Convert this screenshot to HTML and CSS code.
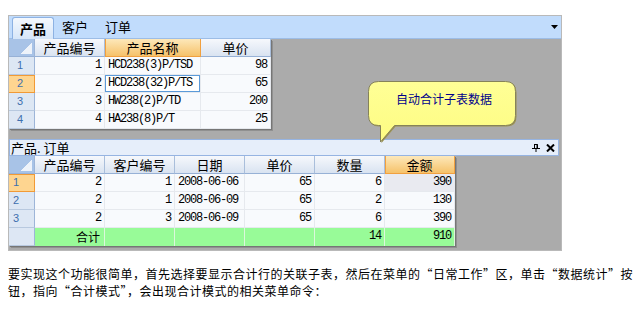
FILE: index.html
```html
<!DOCTYPE html>
<html lang="zh-CN">
<head>
	<meta charset="UTF-8">
	<title>合计模式</title>
	<link rel="stylesheet" href="styles.css">
</head>
<body>
	<div id="frame">
		<div id="tabbar">
			<span class="tab tab-on">产品</span>
			<span class="tab">客户</span>
			<span class="tab">订单</span>
			<svg class="drop" width="7" height="4" viewBox="0 0 7 4"><path d="M0 0H7L3.5 4Z" fill="#000"/></svg>
		</div>
		<div id="master">
			<div class="grid grid-master">
				<div class="corner"></div>
				<div class="hd">产品编号</div>
				<div class="hd hd-on">产品名称</div>
				<div class="hd">单价</div>

				<div class="ind">1</div>
				<div class="num">1</div>
				<div class="txt">HCD238(3)P/TSD</div>
				<div class="num">98</div>

				<div class="ind ind-on">2</div>
				<div class="num">2</div>
				<div class="txt focus">HCD238(32)P/TS</div>
				<div class="num">65</div>

				<div class="ind">3</div>
				<div class="num">3</div>
				<div class="txt">HW238(2)P/TD</div>
				<div class="num">200</div>

				<div class="ind">4</div>
				<div class="num">4</div>
				<div class="txt">HA238(8)P/T</div>
				<div class="num">25</div>
			</div>
		</div>
		<div id="detail-title">
			<span>产品. 订单</span>
			<svg class="pin" width="8" height="8" viewBox="0 0 8 8"><path d="M2 0.5H5.5M2.5 0.5V4M5.5 0.5V4M0 4.5H8M4 4.5V8" stroke="#000" stroke-width="1" fill="none"/><path d="M5 0V4" stroke="#000" stroke-width="1"/></svg>
			<svg class="close" width="9" height="8" viewBox="0 0 9 8"><path d="M1 0.5L8 7.5M8 0.5L1 7.5" stroke="#000" stroke-width="2"/></svg>
		</div>
		<div id="detail">
			<div class="grid grid-detail">
				<div class="corner"></div>
				<div class="hd">产品编号</div>
				<div class="hd">客户编号</div>
				<div class="hd">日期</div>
				<div class="hd">单价</div>
				<div class="hd">数量</div>
				<div class="hd hd-on">金额</div>

				<div class="ind ind-low ind-on">1</div>
				<div class="num">2</div>
				<div class="num">1</div>
				<div class="txt">2008-06-06</div>
				<div class="num">65</div>
				<div class="num">6</div>
				<div class="num cur">390</div>

				<div class="ind ind-low">2</div>
				<div class="num">2</div>
				<div class="num">1</div>
				<div class="txt">2008-06-09</div>
				<div class="num">65</div>
				<div class="num">2</div>
				<div class="num">130</div>

				<div class="ind ind-low">3</div>
				<div class="num">2</div>
				<div class="num">3</div>
				<div class="txt">2008-06-09</div>
				<div class="num">65</div>
				<div class="num">6</div>
				<div class="num">390</div>

				<div class="ind ind-low"></div>
				<div class="sum sum-label">合计</div>
				<div class="sum"></div>
				<div class="sum"></div>
				<div class="sum"></div>
				<div class="sum num">14</div>
				<div class="sum num">910</div>
			</div>
		</div>
		<div id="balloon">
			<svg width="152" height="64" viewBox="0 0 152 64">
				<defs>
					<linearGradient id="bg" x1="0" y1="0" x2="0" y2="1">
						<stop offset="0" stop-color="#ffff96"/>
						<stop offset="1" stop-color="#fdfc82"/>
					</linearGradient>
				</defs>
				<path d="M11.5 1.5H138.5Q148.5 1.5 148.5 11.5V35.5Q148.5 45.5 138.5 45.5H27.5L13.5 62V45.5H11.5Q1.5 45.5 1.5 35.5V11.5Q1.5 1.5 11.5 1.5Z" fill="#9b9150"/>
				<path d="M10.5 0.5H137.5Q147.5 0.5 147.5 10.5V34.5Q147.5 44.5 137.5 44.5H26.5L12.5 61V44.5H10.5Q0.5 44.5 0.5 34.5V10.5Q0.5 0.5 10.5 0.5Z" fill="url(#bg)" stroke="#85825a"/>
				<text x="76" y="23" text-anchor="middle" class="balloon-text">自动合计子表数据</text>
			</svg>
		</div>
	</div>
	<p id="note">要实现这个功能很简单，首先选择要显示合计行的关联子表，然后在菜单的“日常工作”区，单击“数据统计”按钮，指向“合计模式”，会出现合计模式的相关菜单命令：</p>
</body>
</html>
```

FILE: styles.css
```css
*{
	margin:0;
	padding:0;
}
body{
	padding:15px 8px 0;
	font-family:"Noto Sans CJK SC",sans-serif;
	color:#000;
	background:#fff;
}
#frame{
	position:relative;
	width:552px;
	height:234px;
	border:1px solid #b9b9b9;
	background:#ababab;
}
#tabbar{
	display:flex;
	align-items:flex-end;
	height:22px;
	padding-left:3px;
	background:#c1dcfc;
	border-bottom:1px solid #9dbde6;
}
.tab{
	font-size:13px;
	line-height:20px;
	padding:0 9px 1px 8px;
}
.tab-on{
	height:21px;
	margin-bottom:-1px;
	padding:0 7px;
	font-weight:bold;
	line-height:21px;
	border:1px solid #8db2e3;
	border-bottom:none;
	border-radius:3px 3px 0 0;
	background:linear-gradient(#f4f8fd,#d6e6f9);
}
.drop{
	align-self:center;
	margin:0 3px 0 auto;
}
#master{
	height:100px;
}
#detail{
	height:94px;
}
.grid{
	display:grid;
	width:max-content;
	box-shadow:1px 1px 0 #767676,2px 2px 0 #909090;
}
.grid-master{
	grid-template-columns:26px 70px 96px 70px;
}
.grid-detail{
	grid-template-columns:26px repeat(6,70px);
}
.grid > div{
	box-sizing:border-box;
	height:18px;
	line-height:17px;
	border-right:1px solid #e6e9ee;
	border-bottom:1px solid #e6e9ee;
	background:#f8fafd;
	white-space:nowrap;
	overflow:hidden;
}
.grid > .corner{
	border-right:1px solid #9db5d8;
	border-bottom:1px solid #97b1d6;
	background:linear-gradient(to bottom right,#a8c3e7 50%,#eef3fa 50%) no-repeat right 2px bottom 2px/12px 11px,#a8c3e7;
}
.grid > .hd{
	font-size:13px;
	text-align:center;
	border-right:1px solid #a9bedb;
	border-bottom:1px solid #97b1d6;
	background:linear-gradient(#f6f8fc,#d9e3f1);
}
.grid > .hd-on{
	border-right:1px solid #f1a03f;
	border-bottom:1px solid #f1a03f;
	box-shadow:inset 1px 0 0 #f1a03f;
	background:linear-gradient(#fde8ba,#f6c26a);
}
.grid > .ind{
	padding-left:8px;
	font-family:"Liberation Sans",sans-serif;
	font-size:11px;
	color:#3d6fae;
	border-right:1px solid #9db5d8;
	border-bottom:1px solid #b8c9df;
	background:#dde7f4;
}
.grid > .ind-low{
	padding-left:4px;
}
.grid > .ind-on{
	border-right:1px solid #f19a36;
	border-bottom:1px solid #f19a36;
	box-shadow:inset 0 1px 0 #f19a36;
	background:#fed590;
}
.grid > .num,
.grid > .txt{
	font-family:"Liberation Mono",monospace;
	font-size:12px;
	letter-spacing:-1.2px;
}
.grid > .num{
	text-align:right;
	padding-right:3px;
}
.grid > .txt{
	padding-left:3px;
}
.grid > .focus{
	box-shadow:inset 0 0 0 1px #5b9ad9;
	background:#fff;
}
.grid > .cur{
	background:#e9eaf0;
}
.grid > .sum{
	border-right:1px solid #dcf7dc;
	border-bottom:none;
	background:#98fb98;
}
.grid > .sum-label{
	font-family:"Noto Sans CJK SC",sans-serif;
	font-size:12px;
	letter-spacing:0;
	text-align:right;
	padding-right:4px;
}
#detail-title{
	display:flex;
	align-items:center;
	box-sizing:border-box;
	height:17px;
	margin-right:2px;
	padding:0 3px 0 1px;
	font-size:13px;
	line-height:15px;
	border:1px solid #96b4e2;
	background:#e6eefa;
}
#detail-title span{
	flex:1;
}
.pin{
	margin-right:6px;
}
#balloon{
	position:absolute;
	left:359px;
	top:65px;
	width:152px;
	height:64px;
}
#balloon svg{
	display:block;
}
.balloon-text{
	font-family:"Noto Sans CJK SC",sans-serif;
	font-size:12px;
	fill:#00008b;
}
#note{
	margin-top:14px;
	font-size:12px;
	letter-spacing:0.5px;
	line-height:17px;
}
```
